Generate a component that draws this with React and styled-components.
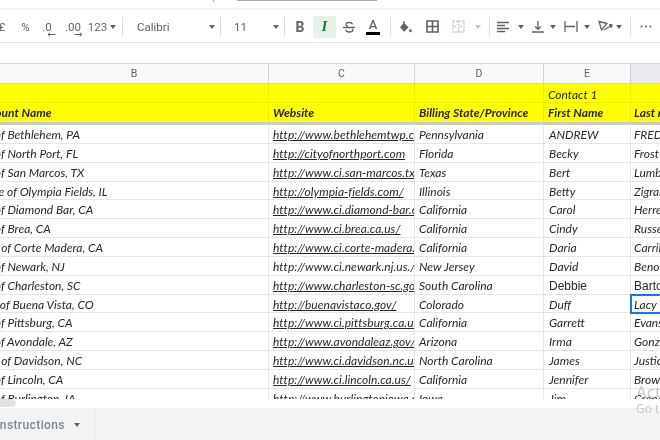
import React from "react";
import styled, { createGlobalStyle } from "styled-components";

const Global = createGlobalStyle`
  html, body { margin: 0; padding: 0; background: #fff; }
  #root { width: 660px; height: 440px; overflow: hidden; }
  * { box-sizing: border-box; }
`;

const Page = styled.div`
  position: relative; width: 660px; height: 440px; display: flex; flex-direction: column; overflow: hidden;
  font-family: "Lato", "Open Sans", sans-serif; background: #fff; filter: blur(0.3px);
`;
const TopStrip = styled.div`
  height: 8px; flex: none; background: #fff; overflow: hidden; display: flex; align-items: flex-start;
`;
const MenuLine = styled.span`
  display: block; margin-left: ${p => p.$ml}px; width: ${p => p.$w}px; height: ${p => p.$h || 1}px; background: #a8a8a8;
`;
const Toolbar = styled.div`
  height: 35px; flex: none; display: flex; align-items: center; padding-top: 1px;
  border-top: 2px solid #f1f3f4; border-bottom: 1px solid #e3e5e7; color: #5f6368; overflow: hidden;
  font: 400 11.5px "Roboto", sans-serif;
`;
const Tool = styled.div`
  position: relative; flex: none; width: ${p => p.$w}px; margin-left: ${p => p.$ml || 0}px; height: 22px; display: flex; align-items: center;
  justify-content: ${p => p.$left ? "flex-start" : "center"};
  background: ${p => p.$active ? "#e6f4ea" : "transparent"}; border-radius: 2px;
  color: ${p => p.$active ? "#188038" : "#5f6368"}; white-space: nowrap;
`;
const BoldGlyph = styled.span`
  font: 700 14px "Roboto", sans-serif;
`;
const ItalicGlyph = styled.span`
  font: italic 700 15px "Liberation Serif", serif;
`;
const ColorA = styled.span`
  display: flex; flex-direction: column; align-items: center; font: 500 13px/13px "Roboto", sans-serif; color: #5f6368;
`;
const ColorBar = styled.span`
  display: block; width: 14px; height: 3px; margin-top: 1px; background: #000;
`;
const ArrowMark = styled.svg`
  position: absolute; left: ${p => p.$x}px; top: 16px;
`;
const Sep = styled.div`
  flex: none; width: 1px; height: 19px; background: #dadce0; margin-left: ${p => p.$ml}px;
`;
const Caret = styled.span`
  flex: none; display: inline-block; width: 0; height: 0; margin-left: ${p => p.$ml ?? 0}px;
  border: 3px solid transparent; border-top: 4px solid ${p => p.$c || "#5f6368"}; border-bottom: 0;
`;
const FormulaBar = styled.div`
  height: 21px; flex: none; background: #fff; border-bottom: 1px solid #d5d7da;
`;
const Row = styled.div`
  flex: none; display: grid; grid-template-columns: 269px 146px 129px 87px 30px;
  height: ${p => p.$h}px;
  background: ${p => p.$bg || "#fff"};
  border-bottom: ${p => p.$bb || "1px solid #e4e5e6"};
`;
const HeadCell = styled.div`
  display: flex; align-items: center; justify-content: center; background: ${p => p.$sel ? "#e8eaed" : "#f8f9fa"};
  border-right: 1px solid #d3d5d8; font: 400 10.5px "Roboto", sans-serif; color: #5f6368;
`;
const Cell = styled.div`
  overflow: hidden; white-space: nowrap; padding: ${p => p.$pt ?? 0}px 0 0 ${p => p.$pl ?? 4}px;
  font: italic ${p => p.$bold ? 700 : 400} 12px/17px "Lato", sans-serif; color: #26282a;
  border-right: 1px solid ${p => p.$line || "#e4e5e6"};
`;
const Clipped = styled.span`
  display: block; margin-left: -${p => p.$off}px;
`;
const Link = styled.span`
  text-decoration: ${p => p.$plain ? "none" : "underline"}; letter-spacing: .03px;
`;
const Plain = styled.span`
  font: 400 12px/17px "Liberation Sans", sans-serif;
`;
const Body = styled.div`
  position: relative; height: 274px; flex: none; overflow: hidden;
`;
const Selected = styled.div`
  position: absolute; left: 630px; top: 169px; width: 40px; height: 20px; border: 2px solid #1a73e8;
`;
const Track = styled.div`
  height: 9px; flex: none; background: #fff;
`;
const Thumb = styled.div`
  width: 16px; height: 8px; background: #e0e1e2; border-radius: 0 4px 4px 0;
`;
const Tabs = styled.div`
  flex: 1; display: flex; background: #f1f3f4; border-top: 1px solid #eceef0;
`;
const Tab = styled.div`
  width: 95px; display: flex; align-items: center; overflow: hidden; white-space: nowrap;
  border-right: 1px solid #e4e6e8; font: 500 12px "Roboto", sans-serif; color: #80868b;
`;
const TabLabel = styled.span`
  margin-left: -4px; margin-right: 9px; letter-spacing: .4px;
`;
const Activate = styled.div`
  position: absolute; left: 636px; top: 382px; color: #c6c8ca; font: 400 17px/20px "Open Sans", sans-serif; white-space: nowrap;
`;
const ActivateSmall = styled.div`
  font-size: 12px; line-height: 14px; margin-top: 0;
`;

const Icon = ({ w = 14, h = 14, children, c = "#5f6368", sw = 1.3 }) => (
  <svg width={w} height={h} viewBox={`0 0 ${w} ${h}`} fill="none" stroke={c} strokeWidth={sw}>{children}</svg>
);

const rows = [
  ["City of Bethlehem, PA", 28, "http://www.bethlehemtwp.com", "Pennsylvania", "ANDREW", "FREDERICK"],
  ["City of North Port, FL", 28, "http://cityofnorthport.com", "Florida", "Becky", "Frost"],
  ["City of San Marcos, TX", 28, "http://www.ci.san-marcos.tx.us", "Texas", "Bert", "Lumbreras"],
  ["Village of Olympia Fields, IL", 29, "http://olympia-fields.com/", "Illinois", "Betty", "Zigras"],
  ["City of Diamond Bar, CA", 28, "http://www.ci.diamond-bar.ca.us", "California", "Carol", "Herrera"],
  ["City of Brea, CA", 28, "http://www.ci.brea.ca.us/", "California", "Cindy", "Russell"],
  ["Town of Corte Madera, CA", 28, "http://www.ci.corte-madera.ca.us", "California", "Daria", "Carrillo"],
  ["City of Newark, NJ", 28, "http://www.ci.newark.nj.us./", "New Jersey", "David", "Benoit", "nolink"],
  ["City of Charleston, SC", 28, "http://www.charleston-sc.gov", "South Carolina", "Debbie", "Barton", "plain"],
  ["City of Buena Vista, CO", 23, "http://buenavistaco.gov/", "Colorado", "Duff", "Lacy"],
  ["City of Pittsburg, CA", 28, "http://www.ci.pittsburg.ca.us", "California", "Garrett", "Evans"],
  ["City of Avondale, AZ", 28, "http://www.avondaleaz.gov/", "Arizona", "Irma", "Gonzalez"],
  ["Town of Davidson, NC", 28, "http://www.ci.davidson.nc.us", "North Carolina", "James", "Justice"],
  ["City of Lincoln, CA", 28, "http://www.ci.lincoln.ca.us/", "California", "Jennifer", "Brown"],
  ["City of Burlington, IA", 28, "http://www.burlingtoniowa.org", "Iowa", "Jim", "Crane"],
];

export default function App() {
  return (
    <Page>
      <Global />
      <TopStrip>
        <MenuLine $ml={213} $w={1} $h={2} />
        <MenuLine $ml={23} $w={140} />
      </TopStrip>
      <Toolbar>
        <Tool $w={6} $ml={-1}>£</Tool>
        <Tool $w={15} $ml={13}>%</Tool>
        <Tool $w={14} $ml={7}>.0
          <ArrowMark $x={7} width="9" height="5" viewBox="0 0 9 5" fill="none" stroke="#5f6368" strokeWidth="1"><path d="M8.5 2.5H1M3 .7 1 2.5l2 1.8" /></ArrowMark>
        </Tool>
        <Tool $w={22} $ml={8}>.00
          <ArrowMark $x={12} width="9" height="5" viewBox="0 0 9 5" fill="none" stroke="#5f6368" strokeWidth="1"><path d="M.5 2.5H8M6 .7l2 1.8-2 1.8" /></ArrowMark>
        </Tool>
        <Tool $w={28} $ml={4}>123<Caret $ml={3} /></Tool>
        <Sep $ml={6} />
        <Tool $w={78} $ml={14} $left>Calibri<Caret $ml={40} /></Tool>
        <Sep $ml={5} />
        <Tool $w={44} $ml={13} $left>11<Caret $ml={26} /></Tool>
        <Sep $ml={6} />
        <Tool $w={20} $ml={5}><BoldGlyph>B</BoldGlyph></Tool>
        <Tool $w={23} $ml={3} $active><ItalicGlyph>I</ItalicGlyph></Tool>
        <Tool $w={20} $ml={3}>
          <Icon w={14} h={14}><path d="M10.5 4.2C10 3 9 2.5 7.2 2.5 5.3 2.5 4 3.3 4 4.6c0 1 .7 1.7 2 2.1M1 7.5h12M10.4 8.8c.3.4.4.8.4 1.2 0 1.3-1.4 2-3.6 2-1.9 0-3.2-.7-3.6-2" /></Icon>
        </Tool>
        <Tool $w={20} $ml={4}><ColorA>A<ColorBar /></ColorA></Tool>
        <Sep $ml={7} />
        <Tool $w={20} $ml={5}>
          <svg width="14" height="14" viewBox="0 0 14 14"><path d="M5.2 1l.9.9-1 1L9.6 7.300 5.200 11.700 1 7.300 4.200 3.800 3.700 2.600z M11.500 8.500c.8 1.100 1.300 1.800 1.300 2.400a1.300 1.300 0 0 1-2.600 0c0-.6.500-1.300 1.300-2.400z" fill="#5f6368" /></svg>
        </Tool>
        <Tool $w={20} $ml={6}>
          <Icon w={13} h={13} sw={1.6}><path d="M1 1h11v11H1zM6.500 1v11M1 6.500h11" /></Icon>
        </Tool>
        <Tool $w={20} $ml={6}>
          <Icon w={13} h={13} c="#c3c6c9" sw={1.4}><path d="M1 1h11v11H1z" strokeDasharray="2 1.200" /><path d="M6.500 1v11M2 6.500h3M8 6.500h3" strokeDasharray="2 1" /></Icon>
        </Tool>
        <Caret $ml={7} $c="#c3c6c9" />
        <Sep $ml={8} />
        <Tool $w={16} $ml={5}>
          <Icon w={12} h={12}><path d="M0 1.500h12M0 4.500h8M0 7.500h12M0 10.500h8" /></Icon>
        </Tool>
        <Caret $ml={7} />
        <Tool $w={16} $ml={6}>
          <Icon w={12} h={13}><path d="M0 12h12M6 1v8M3.200 6.500 6 9.300l2.800-2.800" /></Icon>
        </Tool>
        <Caret $ml={4} />
        <Tool $w={16} $ml={7}>
          <Icon w={14} h={13}><path d="M1 1v11M13 1v11M1 6.500h10" /></Icon>
        </Tool>
        <Caret $ml={5} />
        <Tool $w={16} $ml={7}>
          <Icon w={15} h={13}><path d="M1 1.500 9 3.500 3.500 10zM6 10l8-5M11 4.500l3 .500-1 3" /></Icon>
        </Tool>
        <Caret $ml={3} />
        <Sep $ml={8} />
        <Tool $w={20} $ml={5}>
          <svg width="12" height="3" viewBox="0 0 12 3"><circle cx="1.500" cy="1.500" r="1" fill="#5f6368" /><circle cx="6" cy="1.500" r="1" fill="#5f6368" /><circle cx="10.500" cy="1.500" r="1" fill="#5f6368" /></svg>
        </Tool>
      </Toolbar>
      <FormulaBar />
      <Row $h={20} $bb="1px solid #d3d5d8">
        <HeadCell>B</HeadCell><HeadCell>C</HeadCell><HeadCell>D</HeadCell><HeadCell>E</HeadCell><HeadCell $sel />
      </Row>
      <Row $h={19} $bg="#ffff00" $bb="1px solid #eeee00">
        <Cell $line="#eeee00" /><Cell $line="#eeee00" /><Cell $line="#eeee00" />
        <Cell $line="#eeee00" $pt={2}>Contact 1</Cell><Cell $line="#eeee00" />
      </Row>
      <Row $h={22} $bg="#ffff00" $bb="3px solid #c9cccf">
        <Cell $bold $pl={0} $pt={1} $line="#eeee00"><Clipped $off={23}>Account Name</Clipped></Cell>
        <Cell $bold $pt={1} $line="#eeee00">Website</Cell>
        <Cell $bold $pt={1} $line="#eeee00">Billing State/Province</Cell>
        <Cell $bold $pt={1} $line="#eeee00">First Name</Cell>
        <Cell $bold $pt={1} $pl={3} $line="#eeee00">Last name</Cell>
      </Row>
      <Body>
        {rows.map(([name, off, url, state, first, last, kind]) => (
          <Row key={name} $h={18.85}>
            <Cell $pl={0} $pt={1}><Clipped $off={off}>{name}</Clipped></Cell>
            <Cell $pt={1}><Link $plain={kind === "nolink"}>{url}</Link></Cell>
            <Cell $pt={1}>{state}</Cell>
            <Cell $pt={1} $pl={5}>{kind === "plain" ? <Plain>{first}</Plain> : first}</Cell>
            <Cell $pt={1} $pl={3}>{kind === "plain" ? <Plain>{last}</Plain> : last}</Cell>
          </Row>
        ))}
        <Selected />
      </Body>
      <Track><Thumb /></Track>
      <Tabs>
        <Tab><TabLabel>Instructions</TabLabel><Caret /></Tab>
      </Tabs>
      <Activate>Act<ActivateSmall>Go to</ActivateSmall></Activate>
    </Page>
  );
}
